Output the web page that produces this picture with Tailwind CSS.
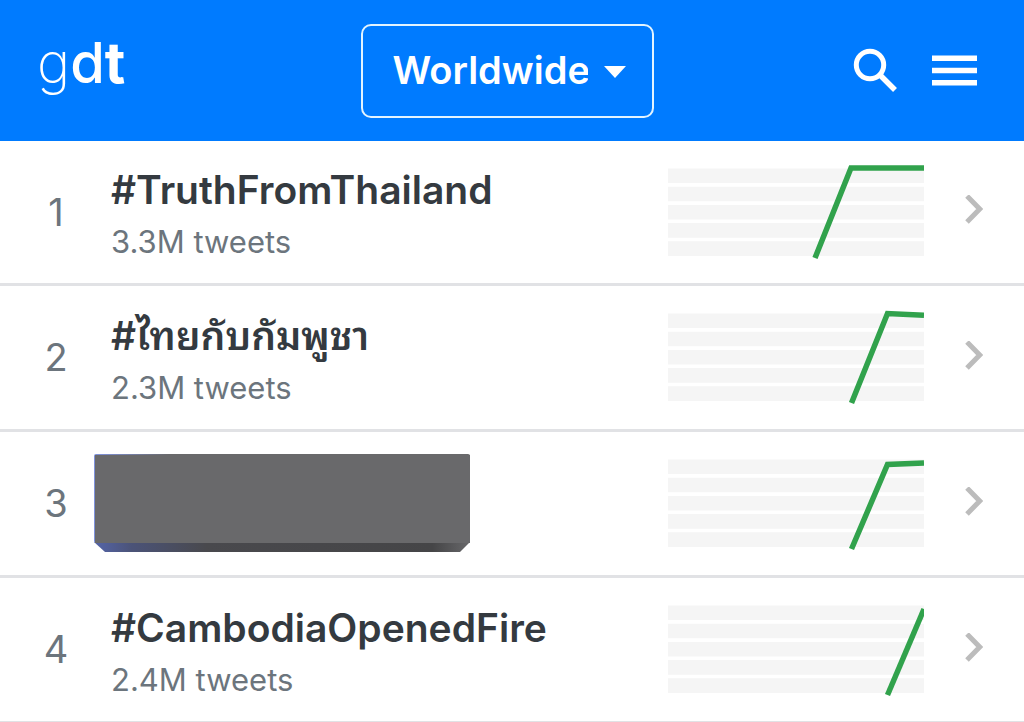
<!DOCTYPE html>
<html lang="en">

<head>
  <meta charset="UTF-8">
  <meta name="viewport" content="width=device-width, initial-scale=1.0">
  <title>Worldwide Trends</title>
  <script src="https://cdn.jsdelivr.net/npm/@tailwindcss/browser@4"></script>
</head>

<body class="bg-white font-['Inter','Noto_Sans_Thai_Looped','Noto_Looped_Thai','Loma','Waree','Noto_Sans_Thai',sans-serif]">
  <header class="grid grid-cols-[1fr_auto_1fr] items-center h-[141px] bg-[#007bff] text-white pl-[37px] pr-[47px]">
    <a href="#" class="justify-self-start text-[56px] leading-[64px] pb-4"><span class="font-extralight">g</span><span class="font-medium">d</span><span class="font-bold">t</span></a>

    <div class="relative">
      <select id="place" aria-label="Location"
        class="block appearance-none w-[293px] h-[94px] pl-[30px] pr-16 border-2 border-[#e3f4ff] rounded-[10px] bg-transparent text-[38px] font-semibold">
        <option>Worldwide</option>
      </select>
      <svg class="absolute right-[28px] top-[42px] pointer-events-none" width="22" height="12" viewBox="0 0 22 12" fill="currentColor">
        <path d="M0 0h22L11 12z" />
      </svg>
    </div>

    <div class="flex items-center gap-[34px] justify-self-end">
      <button type="button" aria-label="Search">
        <svg width="46" height="46" viewBox="0 0 46 46" fill="none" stroke="currentColor">
          <circle cx="18" cy="17" r="13.7" stroke-width="5" />
          <path d="M28 27l15 15" stroke-width="5.5" />
        </svg>
      </button>
      <button type="button" aria-label="Menu">
        <svg width="45" height="32" viewBox="0 0 45 32" fill="currentColor">
          <path d="M0 .5h45V6H0zM0 12.8h45v5.4H0zM0 25h45v5.500H0z" />
        </svg>
      </button>
    </div>
  </header>

  <!-- stripes and arrow shared by every row -->
  <svg class="hidden">
    <symbol id="stripes" viewBox="0 0 256 99">
      <path fill="#f5f5f5" d="M0 5.5h256v14.6H0zM0 23.7h256v14.6H0zM0 41.9h256v14.6H0zM0 60.1h256v14.6H0zM0 78.3h256v14.6H0z" />
    </symbol>
    <symbol id="chevron" viewBox="0 0 18 34">
      <path d="M2 1l12.700 13L2 27" fill="none" stroke="#bcbcbc" stroke-width="5" />
    </symbol>
  </svg>

  <ol>
    <li class="border-b-3 border-[#e1e2e5]">
      <a href="#" class="flex items-center h-[142px] pr-[41px]">
        <span class="w-28 text-center text-[38px] text-[#6c757d]">1</span>
        <div class="flex-1 pt-2 -ml-px">
          <h2 class="text-[39px] leading-[52px] font-semibold text-[#343a40]">#TruthFromThailand</h2>
          <p class="text-[31px] leading-[52px] text-[#6c757d]">3.3M tweets</p>
        </div>
        <svg class="mr-[41px]" width="256" height="99" viewBox="0 0 256 99">
          <use href="#stripes" />
          <path d="M147 95L183 5H256" fill="none" stroke="#31a24c" stroke-width="5.5" />
        </svg>
        <svg width="18" height="34"><use href="#chevron" /></svg>
      </a>
    </li>
    <li class="border-b-3 border-[#e1e2e5]">
      <a href="#" class="flex items-center h-[143px] pr-[41px]">
        <span class="w-28 text-center text-[38px] text-[#6c757d]">2</span>
        <div class="flex-1 pt-2 -ml-px">
          <h2 class="text-[39px] leading-[52px] font-semibold text-[#343a40]">#ไทยกับกัมพูชา</h2>
          <p class="text-[31px] leading-[52px] text-[#6c757d]">2.3M tweets</p>
        </div>
        <svg class="mr-[41px]" width="256" height="99" viewBox="0 0 256 99">
          <use href="#stripes" />
          <path d="M183.500 95L219.500 5.500L256 7.300" fill="none" stroke="#31a24c" stroke-width="5.5" />
        </svg>
        <svg width="18" height="34"><use href="#chevron" /></svg>
      </a>
    </li>
    <li class="border-b-3 border-[#e1e2e5]">
      <a href="#" class="flex items-center h-[143px] pr-[41px]">
        <span class="w-28 text-center text-[38px] text-[#6c757d]">3</span>
        <div class="flex-1">
          <svg class="-ml-[18px]" width="376" height="100" viewBox="0 0 376 100" role="img" aria-label="Hidden topic">
            <defs>
              <linearGradient id="edge">
                <stop offset="0" stop-color="#5565a8" />
                <stop offset=".1" stop-color="#4b5378" />
                <stop offset=".3" stop-color="#49494d" />
                <stop offset=".9" stop-color="#454547" />
                <stop offset="1" stop-color="#68686a" />
              </linearGradient>
              <linearGradient id="rim">
                <stop offset="0" stop-color="#8093dd" />
                <stop offset=".2" stop-color="#69696b" />
              </linearGradient>
            </defs>
            <path d="M0 88H376L366 98H11z" fill="url(#edge)" />
            <rect width="376" height="89" rx="2" fill="url(#rim)" />
            <path d="M1 1H376V89H1z" fill="#69696b" />
          </svg>
        </div>
        <svg class="mr-[41px]" width="256" height="99" viewBox="0 0 256 99">
          <use href="#stripes" />
          <path d="M183.500 95L219.500 10.500L256 9" fill="none" stroke="#31a24c" stroke-width="5.5" />
        </svg>
        <svg width="18" height="34"><use href="#chevron" /></svg>
      </a>
    </li>
    <li class="border-b-3 border-[#e1e2e5]">
      <a href="#" class="flex items-center h-[143px] pr-[41px]">
        <span class="w-28 text-center text-[38px] text-[#6c757d]">4</span>
        <div class="flex-1 pt-2 -ml-px">
          <h2 class="text-[39px] leading-[52px] font-semibold text-[#343a40]">#CambodiaOpenedFire</h2>
          <p class="text-[31px] leading-[52px] text-[#6c757d]">2.4M tweets</p>
        </div>
        <svg class="mr-[41px]" width="256" height="99" viewBox="0 0 256 99">
          <use href="#stripes" />
          <path d="M219.500 95L256 9" fill="none" stroke="#31a24c" stroke-width="5.5" />
        </svg>
        <svg width="18" height="34"><use href="#chevron" /></svg>
      </a>
    </li>
  </ol>
</body>

</html>
